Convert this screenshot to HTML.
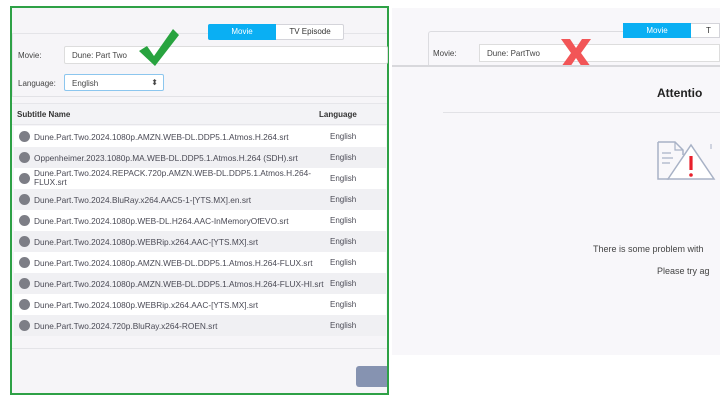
<!DOCTYPE html>
<html><head><style>
*{margin:0;padding:0;box-sizing:border-box}
body{width:720px;height:400px;background:#fff;font-family:"Liberation Sans",sans-serif;position:relative;overflow:hidden;font-size:8px;color:#333}
.a{position:absolute}
.row{position:absolute;left:14px;width:372px;height:21px;}
.row .d{position:absolute;left:5px;top:5px;width:11px;height:11px;border-radius:50%;background:#7d7e86}
.row .n{position:absolute;left:20px;top:6px;color:#4a4a55;font-size:8.3px;white-space:nowrap}
.row .l{position:absolute;left:316px;top:6px;color:#4a4a55}
</style></head><body>
<div class="a" style="left:10px;top:6px;width:379px;height:389px;background:#f6f5f8;border:2px solid #2ea146"></div>
<div class="a" style="left:12px;top:33px;width:375px;height:64px;border-top:1px solid #e4e4e8;border-bottom:1px solid #e2e2e6;border-left:1px solid #e4e4e8"></div>
<div class="a" style="left:208px;top:24px;width:136px;height:16px;border:1px solid #d4d4da;background:#fff;border-radius:2px"></div>
<div class="a" style="left:208px;top:24px;width:68px;height:16px;background:#0aaff3;color:#fff;text-align:center;line-height:16px;border-radius:2px 0 0 2px">Movie</div>
<div class="a" style="left:276px;top:24px;width:68px;height:16px;text-align:center;line-height:16px;color:#333">TV Episode</div>
<div class="a" style="left:18px;top:51px;color:#444">Movie:</div>
<div class="a" style="left:64px;top:46px;width:324px;height:18px;background:#fff;border:1px solid #ddd;border-radius:2px;padding:4px 7px;color:#444">Dune: Part Two</div>
<svg class="a" style="left:138px;top:28px" width="42" height="40" viewBox="0 0 42 40"><path d="M1 23 L9 18 L16 28 L35 1 L41 7 L17 38 Z" fill="#28a33f"/></svg>
<div class="a" style="left:18px;top:79px;color:#444">Language:</div>
<div class="a" style="left:64px;top:74px;width:100px;height:17px;background:#fff;border:1px solid #8cc6ee;border-radius:2px;padding:4px 7px;color:#444">English<span style="position:absolute;right:5px;top:3px;font-size:8px">⬍</span></div>
<div class="a" style="left:12px;top:103px;width:375px;height:22px;background:#f3f3f6;border-top:1px solid #e6e6ea;border-bottom:1px solid #e6e6ea"></div>
<div class="a" style="left:17px;top:110px;font-weight:bold;color:#333">Subtitle Name</div>
<div class="a" style="left:319px;top:110px;font-weight:bold;color:#333">Language</div>
<div class="row" style="top:126px;background:#fff"><div class="d"></div><div class="n">Dune.Part.Two.2024.1080p.AMZN.WEB-DL.DDP5.1.Atmos.H.264.srt</div><div class="l">English</div></div>
<div class="row" style="top:147px;background:#f0f0f3"><div class="d"></div><div class="n">Oppenheimer.2023.1080p.MA.WEB-DL.DDP5.1.Atmos.H.264 (SDH).srt</div><div class="l">English</div></div>
<div class="row" style="top:168px;background:#fff"><div class="d"></div><div class="n" style="top:1px;line-height:9px">Dune.Part.Two.2024.REPACK.720p.AMZN.WEB-DL.DDP5.1.Atmos.H.264-<br>FLUX.srt</div><div class="l">English</div></div>
<div class="row" style="top:189px;background:#f0f0f3"><div class="d"></div><div class="n">Dune.Part.Two.2024.BluRay.x264.AAC5-1-[YTS.MX].en.srt</div><div class="l">English</div></div>
<div class="row" style="top:210px;background:#fff"><div class="d"></div><div class="n">Dune.Part.Two.2024.1080p.WEB-DL.H264.AAC-InMemoryOfEVO.srt</div><div class="l">English</div></div>
<div class="row" style="top:231px;background:#f0f0f3"><div class="d"></div><div class="n">Dune.Part.Two.2024.1080p.WEBRip.x264.AAC-[YTS.MX].srt</div><div class="l">English</div></div>
<div class="row" style="top:252px;background:#fff"><div class="d"></div><div class="n">Dune.Part.Two.2024.1080p.AMZN.WEB-DL.DDP5.1.Atmos.H.264-FLUX.srt</div><div class="l">English</div></div>
<div class="row" style="top:273px;background:#f0f0f3"><div class="d"></div><div class="n">Dune.Part.Two.2024.1080p.AMZN.WEB-DL.DDP5.1.Atmos.H.264-FLUX-HI.srt</div><div class="l">English</div></div>
<div class="row" style="top:294px;background:#fff"><div class="d"></div><div class="n">Dune.Part.Two.2024.1080p.WEBRip.x264.AAC-[YTS.MX].srt</div><div class="l">English</div></div>
<div class="row" style="top:315px;background:#f0f0f3"><div class="d"></div><div class="n">Dune.Part.Two.2024.720p.BluRay.x264-ROEN.srt</div><div class="l">English</div></div>
<div class="a" style="left:12px;top:348px;width:375px;height:1px;background:#e4e4e8"></div>
<div class="a" style="left:356px;top:366px;width:31px;height:21px;background:#8693b1;border-radius:3px 0 0 3px"></div>
<div class="a" style="left:392px;top:8px;width:328px;height:347px;background:#f8f7fa"></div>
<div class="a" style="left:428px;top:31px;width:292px;height:36px;border:1px solid #dcdce0;border-right:none;border-bottom:none;border-radius:3px 0 0 0"></div>
<div class="a" style="left:623px;top:23px;width:97px;height:15px;background:#fff;border:1px solid #d4d4da"></div>
<div class="a" style="left:623px;top:23px;width:68px;height:15px;background:#0aaff3;color:#fff;text-align:center;line-height:15px">Movie</div>
<div class="a" style="left:706px;top:26px;color:#333">T</div>
<div class="a" style="left:433px;top:49px;color:#444">Movie:</div>
<div class="a" style="left:479px;top:44px;width:241px;height:18px;background:#fff;border:1px solid #ddd;padding:4px 7px;color:#444">Dune: PartTwo</div>
<svg class="a" style="left:560px;top:38px" width="32" height="30" viewBox="0 0 32 30"><path d="M1 1 H10 L16 10 L22 1 H31 L21 15 L31 29 H22 L16 20 L10 29 H1 L11 15 Z" fill="#f25557"/></svg>
<div class="a" style="left:392px;top:65px;width:328px;height:2px;background:#d8d8dc"></div>
<div class="a" style="left:657px;top:86px;font-weight:bold;font-size:12px;color:#222">Attentio</div>
<div class="a" style="left:443px;top:112px;width:277px;height:1px;background:#e2e2e6"></div>
<svg class="a" style="left:656px;top:141px" width="64" height="42" viewBox="0 0 64 42"><path d="M2 1 H19 L27 9 V14 M2 1 V38 H13" fill="none" stroke="#a8b2c6" stroke-width="1.5"/><path d="M19 1 V9 H27" fill="none" stroke="#a8b2c6" stroke-width="1.2"/><path d="M6 12 H15 M6 17 H17 M6 22 H14" stroke="#a8b2c6" stroke-width="1.2"/><path d="M12 38 L35 4 L58 38 Z" fill="#fff" stroke="#a8b2c6" stroke-width="1.5"/><path d="M35 15 V29" stroke="#e8202c" stroke-width="3.2"/><circle cx="35" cy="34" r="1.8" fill="#e8202c"/><path d="M55 3 V8" stroke="#a8b2c6"/></svg>
<div class="a" style="left:593px;top:244px;color:#444;font-size:9px;white-space:nowrap">There is some problem with</div>
<div class="a" style="left:657px;top:266px;color:#444;font-size:9px;white-space:nowrap">Please try ag</div>
</body></html>
